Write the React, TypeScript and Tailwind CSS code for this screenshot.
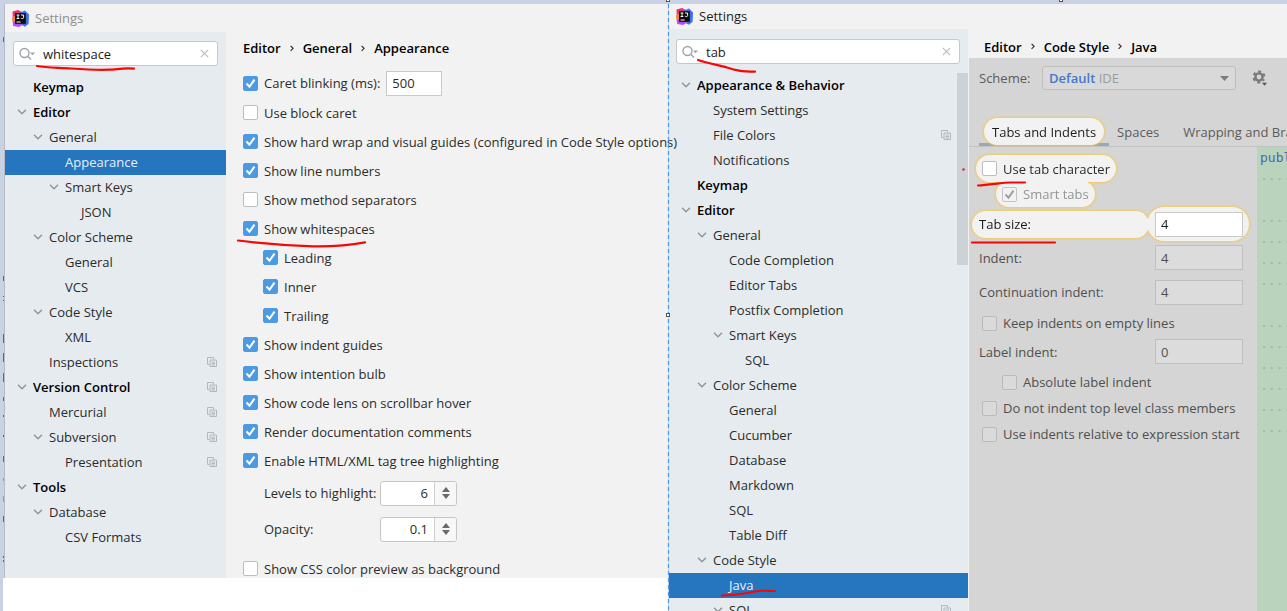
import { useId, type ReactNode } from "react";

type TreeItem = {
  label: string;
  level: number;
  open?: boolean;
  bold?: boolean;
  project?: boolean;
  selected?: boolean;
};

const leftTree: TreeItem[] = [
  { label: "Keymap", level: 0, bold: true },
  { label: "Editor", level: 0, bold: true, open: true },
  { label: "General", level: 1, open: true },
  { label: "Appearance", level: 2, selected: true },
  { label: "Smart Keys", level: 2, open: true },
  { label: "JSON", level: 3 },
  { label: "Color Scheme", level: 1, open: true },
  { label: "General", level: 2 },
  { label: "VCS", level: 2 },
  { label: "Code Style", level: 1, open: true },
  { label: "XML", level: 2 },
  { label: "Inspections", level: 1, project: true },
  { label: "Version Control", level: 0, bold: true, open: true, project: true },
  { label: "Mercurial", level: 1, project: true },
  { label: "Subversion", level: 1, open: true, project: true },
  { label: "Presentation", level: 2, project: true },
  { label: "Tools", level: 0, bold: true, open: true },
  { label: "Database", level: 1, open: true },
  { label: "CSV Formats", level: 2 },
];

const rightTree: TreeItem[] = [
  { label: "Appearance & Behavior", level: 0, bold: true, open: true },
  { label: "System Settings", level: 1 },
  { label: "File Colors", level: 1, project: true },
  { label: "Notifications", level: 1 },
  { label: "Keymap", level: 0, bold: true },
  { label: "Editor", level: 0, bold: true, open: true },
  { label: "General", level: 1, open: true },
  { label: "Code Completion", level: 2 },
  { label: "Editor Tabs", level: 2 },
  { label: "Postfix Completion", level: 2 },
  { label: "Smart Keys", level: 2, open: true },
  { label: "SQL", level: 3 },
  { label: "Color Scheme", level: 1, open: true },
  { label: "General", level: 2 },
  { label: "Cucumber", level: 2 },
  { label: "Database", level: 2 },
  { label: "Markdown", level: 2 },
  { label: "SQL", level: 2 },
  { label: "Table Diff", level: 2 },
  { label: "Code Style", level: 1, open: true },
  { label: "Java", level: 2, selected: true },
  { label: "SQL", level: 2, open: true, project: true },
];

const indents = ["pl-[9px]", "pl-[25px]", "pl-[41px]", "pl-[57px]"];

function AppLogo() {
  return (
    <svg width="17" height="17" viewBox="0 0 17 17" aria-hidden="true">
      <path d="M.5 1.500 6 0l5 2.500L7 9 .8 8z" fill="#e8336d" />
      <path d="M0 7.500 2 6l3 .5V13l-4.500-.5z" fill="#f5803e" />
      <path d="M8 2.500 13 .5l4 4-.4 9.300-3.600 3L8 14z" fill="#3f6fe8" />
      <path d="M.8 12l5-1 5.200 3.800-4 2.200-5.800-1z" fill="#b74af7" />
      <rect x="3" y="3.200" width="10.800" height="10.600" fill="#0b0b0e" />
      <path
        d="M4.600 5h2.800M6 5v3.500M4.600 8.500h2.800M9 5h2.600v2.500q0 1.100-1.200 1.100-.9 0-1.500-.7M4.600 12h4"
        stroke="#fff"
        strokeWidth="1"
        fill="none"
      />
    </svg>
  );
}

function TitleBar({ active }: { active?: boolean }) {
  return (
    <header className="flex h-7 shrink-0 items-center gap-[6px] pl-[7px]">
      <AppLogo />
      <h1 className={active ? "text-[#1c1c1c]" : "text-[#8f8f8f]"}>Settings</h1>
    </header>
  );
}

function SearchBox({ value }: { value: string }) {
  return (
    <div className="flex h-[25px] items-center rounded-[3px] border border-[#c6c9cb] bg-white pr-[8px] pl-[5px]">
      <svg width="18" height="14" viewBox="0 0 18 14" fill="none" stroke="#9aa4ab" strokeWidth="1.400" aria-hidden="true">
        <circle cx="5.500" cy="6" r="4.500" />
        <path d="M9 9.500l3 3" />
        <path d="M11 5.500h5L13.500 8.300z" fill="#9aa4ab" stroke="none" />
      </svg>
      <input
        type="text"
        aria-label="Search settings"
        defaultValue={value}
        className="ml-1.5 min-w-0 flex-1 bg-transparent text-[#1c1c1c] outline-none"
      />
      <button type="button" aria-label="Clear search">
        <svg width="9" height="9" viewBox="0 0 9 9" stroke="#b9bec2" strokeWidth="1.200" aria-hidden="true">
          <path d="M.8.8l7.400 7.400M8.200.8L.8 8.200" />
        </svg>
      </button>
    </div>
  );
}

function Tree({ items, end }: { items: TreeItem[]; end: string }) {
  return (
    <ul>
      {items.map((item, i) => (
        <li key={i}>
          <button
            type="button"
            className={`flex h-[25px] w-full items-center gap-[3px] pb-[2px] text-left ${indents[item.level]} ${end} ${
              item.selected ? "bg-[#2675bf] text-[#e6effa]" : item.bold ? "text-black" : "text-[#2b2b2b]"
            } ${item.bold ? "font-semibold" : ""}`}
          >
            <span className="flex w-4 justify-center">
              {item.open && (
                <svg width="10" height="6" viewBox="0 0 10 6" fill="none" stroke="#8e959a" strokeWidth="1.400" aria-hidden="true">
                  <path d="M1 .8l4 4 4-4" />
                </svg>
              )}
            </span>
            <span className="flex-1 whitespace-nowrap">{item.label}</span>
            {item.project && (
              <svg width="10" height="10" viewBox="0 0 10 10" fill="none" stroke="#b0b9c0" aria-hidden="true">
                <path d="M2.500 7.500h-2v-7h6v2" />
                <path d="M3 3h6.500v6.500H3zM4.500 5h3.500M4.500 6.500h3.500M4.500 8h3.500" />
              </svg>
            )}
          </button>
        </li>
      ))}
    </ul>
  );
}

function Breadcrumb({ path }: { path: string[] }) {
  return (
    <nav className="flex items-center font-semibold text-black">
      {path.map((part, i) => (
        <span key={part} className="flex items-center">
          {i > 0 && (
            <svg className="mx-[9px]" width="4" height="7" viewBox="0 0 4 7" fill="none" stroke="#333" strokeWidth="1.200" aria-hidden="true">
              <path d="M.6.800l2.500 2.500L.6 5.800" />
            </svg>
          )}
          {part}
        </span>
      ))}
    </nav>
  );
}

function Check({
  label,
  checked = false,
  tone = "normal",
}: {
  label: string;
  checked?: boolean;
  tone?: "normal" | "dim" | "disabled";
}) {
  const box =
    tone === "dim"
      ? "border-[#bababa] bg-[#dadada]"
      : tone === "disabled"
        ? "border-[#c4c4c4] bg-[#f2f2f2]"
        : "border-[#bdbdbd] bg-white checked:border-[#4c9be2] checked:bg-[#4c9be2]";
  const text = tone === "dim" ? "text-[#4f4f4f]" : tone === "disabled" ? "text-[#949494]" : "text-[#2b2b2b]";
  return (
    <label className={`flex items-center gap-[6px] whitespace-nowrap ${text}`}>
      <span className="relative flex">
        <input
          type="checkbox"
          defaultChecked={checked}
          disabled={tone === "disabled"}
          className={`peer size-[15px] appearance-none rounded-[2px] border ${box}`}
        />
        <svg
          className="pointer-events-none absolute inset-0 hidden peer-checked:block"
          width="15"
          height="15"
          viewBox="0 0 15 15"
          fill="none"
          stroke={tone === "disabled" ? "#a0a0a0" : "#fff"}
          strokeWidth="2"
          aria-hidden="true"
        >
          <path d="M3.500 7.500l3 3.200 5-7" />
        </svg>
      </span>
      {label}
    </label>
  );
}

function Spinner({ label, value }: { label: string; value: string }) {
  const id = useId();
  return (
    <div className="flex h-9 items-center pl-[21px]">
      <label htmlFor={id} className="w-[116px] whitespace-nowrap">
        {label}
      </label>
      <div className="flex h-[25px] w-[77px] overflow-hidden rounded-[3px] border border-[#c6c6c6] bg-white">
        <input id={id} type="text" defaultValue={value} className="min-w-0 flex-1 pr-1.5 text-right outline-none" />
        <div className="flex w-[22px] flex-col items-center justify-center gap-[2px] border-l border-[#d0d0d0] bg-[#f7f7f7]">
          <button type="button" aria-label={`Increase ${label}`}>
            <svg className="block" width="8" height="5" viewBox="0 0 8 5" fill="#6a6a6a" aria-hidden="true">
              <path d="M0 5l4-5 4 5z" />
            </svg>
          </button>
          <button type="button" aria-label={`Decrease ${label}`}>
            <svg className="block" width="8" height="5" viewBox="0 0 8 5" fill="#6a6a6a" aria-hidden="true">
              <path d="M0 0l4 5 4-5z" />
            </svg>
          </button>
        </div>
      </div>
    </div>
  );
}

function NumberRow({ label, value, height }: { label: string; value: string; height: string }) {
  const id = useId();
  return (
    <div className={`flex items-center pr-[14px] pl-[10px] text-[#4f4f4f] ${height}`}>
      <label htmlFor={id} className="flex-1 whitespace-nowrap">
        {label}
      </label>
      <input
        id={id}
        type="text"
        defaultValue={value}
        className="h-[25px] w-[88px] border border-[#bfbfbf] bg-[#dcdcdc] px-[5px] outline-none"
      />
    </div>
  );
}

function Row({ children, className = "h-[29px]" }: { children: ReactNode; className?: string }) {
  return <div className={`flex items-center ${className}`}>{children}</div>;
}

function AppearanceWindow() {
  return (
    <section className="flex min-w-0 flex-col border-l border-[#b9bcc2] bg-[#f2f2f2]">
      <TitleBar />
      <div className="flex">
        <aside className="w-[221px] shrink-0 bg-[#e6ebef] pt-[9px]">
          <div className="pr-[8px] pb-[9px] pl-[8px]">
            <SearchBox value="whitespace" />
          </div>
          <Tree items={leftTree} end="pr-[9px]" />
        </aside>
        <main className="min-w-0 flex-1 pl-[17px] text-[#2b2b2b]">
          <Row className="mb-1 h-8">
            <Breadcrumb path={["Editor", "General", "Appearance"]} />
          </Row>
          <Row className="h-[30px] gap-[6px]">
            <Check label="Caret blinking (ms):" checked />
            <input
              type="text"
              aria-label="Caret blinking (ms)"
              defaultValue="500"
              className="h-[25px] w-14 border border-[#c9c9c9] bg-white px-[5px] outline-none"
            />
          </Row>
          <Row><Check label="Use block caret" /></Row>
          <Row><Check label="Show hard wrap and visual guides (configured in Code Style options)" checked /></Row>
          <Row><Check label="Show line numbers" checked /></Row>
          <Row><Check label="Show method separators" /></Row>
          <Row><Check label="Show whitespaces" checked /></Row>
          <div className="pl-5">
            <Row><Check label="Leading" checked /></Row>
            <Row><Check label="Inner" checked /></Row>
            <Row><Check label="Trailing" checked /></Row>
          </div>
          <Row><Check label="Show indent guides" checked /></Row>
          <Row><Check label="Show intention bulb" checked /></Row>
          <Row><Check label="Show code lens on scrollbar hover" checked /></Row>
          <Row><Check label="Render documentation comments" checked /></Row>
          <Row><Check label="Enable HTML/XML tag tree highlighting" checked /></Row>
          <Spinner label="Levels to highlight:" value="6" />
          <Spinner label="Opacity:" value="0.1" />
          <Row className="mt-3 h-[19px]"><Check label="Show CSS color preview as background" /></Row>
        </main>
      </div>
    </section>
  );
}

/* Highlight pills: the outline is a filter on the group, so pills that touch share one contour. */
const pill = "rounded-full border-2 border-transparent bg-[#f2f2f2] bg-clip-padding";
const outline = "[filter:drop-shadow(0_0_1px_#f5c53c)_drop-shadow(0_0_1px_#f3cd62)]";

function CodeStyleWindow() {
  return (
    <section className="flex min-w-0 flex-1 flex-col overflow-hidden bg-[#f2f2f2]">
      <div className="-mt-[2px] -mb-[1px] shrink-0">
        <TitleBar active />
      </div>
      <div className="flex min-h-0 flex-1">
        <aside className="relative w-[299px] shrink-0 overflow-hidden bg-[#e6ebef] pt-[10px]">
          <div className="pr-[8px] pb-[9px] pl-[7px]">
            <SearchBox value="tab" />
          </div>
          <Tree items={rightTree} end="pr-[17px]" />
          <div className="absolute top-[44px] right-0 h-[192px] w-[11px] bg-[#cdd2d6]" />
        </aside>
        <main className="flex min-w-0 flex-1 flex-col pl-[1px]">
          <Row className="h-[29px] shrink-0 pt-1.5 pl-[15px]">
            <Breadcrumb path={["Editor", "Code Style", "Java"]} />
          </Row>
          <div className="flex min-h-0 flex-1 flex-col bg-[#d5d5d5]">
            <div className="flex h-10 shrink-0 items-center pl-[10px] text-[#5c5c5c]">
              <label htmlFor="scheme" className="w-[63px]">
                Scheme:
              </label>
              <div className="relative flex h-6 w-[194px] shrink-0 items-center rounded-[3px] border border-[#bdbdbd] bg-[#d9d9d9] px-1.5">
                <select id="scheme" className="absolute inset-0 appearance-none opacity-0">
                  <option>Default IDE</option>
                </select>
                <span className="pointer-events-none flex-1">
                  <span className="font-semibold text-[#4478c8]">Default</span> <span className="text-[#9c9c9c]">IDE</span>
                </span>
                <svg width="9" height="5" viewBox="0 0 9 5" fill="#7d7d7d" aria-hidden="true">
                  <path d="M0 0h9L4.500 5z" />
                </svg>
              </div>
              <button type="button" aria-label="Scheme actions" className="ml-4 shrink-0">
                <svg width="16" height="16" viewBox="0 0 16 16" aria-hidden="true">
                  <g fill="none" stroke="#7a7a7a">
                    <circle cx="7" cy="7" r="3.600" strokeWidth="2.400" />
                    <circle cx="7" cy="7" r="5.400" strokeWidth="2.200" strokeDasharray="2.800 2.855" strokeDashoffset="1.400" transform="rotate(30 7 7)" />
                  </g>
                  <path d="M10 12.800h5L12.500 15.800z" fill="#555" />
                </svg>
              </button>
            </div>
            <div role="tablist" className="flex h-[49px] shrink-0 items-end border-b border-[#c2c2c2] pl-[10px] whitespace-nowrap text-[#5c5c5c]">
              <div className="h-[30px] border-b-[3px] border-[#9aa7b8] px-[3px]">
                <div className={outline}>
                  <button
                    type="button"
                    role="tab"
                    aria-selected="true"
                    className={`h-[31px] px-2 text-[#1c1c1c] ${pill}`}
                  >
                    Tabs and Indents
                  </button>
                </div>
              </div>
              <button type="button" role="tab" aria-selected="false" className="ml-2 h-[28px]">
                Spaces
              </button>
              <button type="button" role="tab" aria-selected="false" className="ml-6 h-[28px]">
                Wrapping and Braces
              </button>
            </div>
            <div className="flex min-h-0 flex-1">
              <div className="w-[288px] shrink-0 pt-1.5">
                <div className={outline}>
                  <div className={`ml-[5px] flex h-[31px] w-fit items-center px-[6px] ${pill}`}>
                    <Check label="Use tab character" />
                  </div>
                  <div className={`-mt-[5px] -mb-[1px] ml-[25px] flex h-[30px] w-fit items-center px-[6px] ${pill}`}>
                    <Check label="Smart tabs" tone="disabled" checked />
                  </div>
                  <div className="flex h-8 items-center pr-[6px] pl-[1px]">
                    <label htmlFor="tab-size" className={`-mr-1.5 flex h-[31px] flex-1 items-center pl-[7px] text-[#1c1c1c] ${pill}`}>
                      Tab size:
                    </label>
                    <div className={`flex h-[38px] w-[106px] shrink-0 items-center pr-[6px] pl-2 ${pill}`}>
                      <input
                        id="tab-size"
                        type="text"
                        defaultValue="4"
                        className="h-[25px] w-full border border-[#c9c9c9] bg-white px-[5px] text-[#1c1c1c] outline-none"
                      />
                    </div>
                  </div>
                </div>
                <NumberRow label="Indent:" value="4" height="h-[35px]" />
                <NumberRow label="Continuation indent:" value="4" height="h-[34px]" />
                <Row className="h-[28px] pl-[13px]"><Check label="Keep indents on empty lines" tone="dim" /></Row>
                <NumberRow label="Label indent:" value="0" height="h-[29px]" />
                <Row className="mt-[3px] h-[26px] pl-[33px]"><Check label="Absolute label indent" tone="dim" /></Row>
                <Row className="h-[26px] pl-[13px]"><Check label="Do not indent top level class members" tone="dim" /></Row>
                <Row className="h-[26px] pl-[13px]"><Check label="Use indents relative to expression start" tone="dim" /></Row>
              </div>
              <pre className="min-w-0 flex-1 overflow-hidden bg-[#b9d3bd] pl-[3px] font-['DejaVu_Sans_Mono',monospace] text-[13px] leading-[21px] text-[#a0b3a4]">
                <span className="text-[#4a68ac]">public</span>
                {"\n····\n\n····\n····\n····\n····\n\n····\n····\n····\n····\n····\n····"}
              </pre>
            </div>
          </div>
        </main>
      </div>
    </section>
  );
}

/* Hand-drawn red marks, the selection frame and its handles. */
function Annotations() {
  return (
    <svg className="pointer-events-none absolute top-0 left-0 z-20" width="1287" height="611" viewBox="0 0 1287 611" aria-hidden="true">
      <path d="M668.500 4v607" stroke="#4f9fe6" strokeWidth="1.300" strokeDasharray="4 3" />
      <g fill="#fff" stroke="#555">
        <rect x="666.500" y="-1.500" width="3" height="3" />
        <rect x="1059.500" y="-1.500" width="3" height="3" />
        <rect x="666.500" y="313.500" width="3" height="3" />
      </g>
      <g fill="none" stroke="#f80606" strokeWidth="2.200" strokeLinecap="round" strokeLinejoin="round">
        <path d="M37 66c10 2 22 1.500 34 2.500 14 1 26 1.800 38 1.200 9-.4 15-2 25-1" />
        <path d="M238 240.500c24 3 50 5 75 5.800 20 .4 36-1 52-4" />
        <path d="M698 60c10 3.500 20 5 29 7.500 9 3 14 4 28 4.200" />
        <path d="M978 185.500c12-.5 24-3 33-3h14" />
        <path d="M972 242.500h83" />
        <path d="M722 595.500c14-.5 24-2 33-4 8-1.500 12-.5 20-.5" />
      </g>
      <circle cx="963.500" cy="169.500" r="1.200" fill="#e02020" />
      <g fill="#5b6780">
        <rect x="3" y="37" width="1" height="5" />
        <rect x="3" y="276" width="1" height="5" />
        <path d="M3 296h1v1H3zM3 300h1v1H3zM3 334h1v9H3zM3 353h1v9H3z" />
        <path d="M3 373h1v9H3zM3 397h1v4H3zM3 415h1v2H3zM3 435h1v2H3z" />
        <path d="M3 456h1v6H3zM3 516h1v6H3zM3 556h1v2H3zM3 560h1v2H3z" />
      </g>
      <path d="M3 478h1v3H3zM3 496h1v6H3z" fill="#d58c4c" />
    </svg>
  );
}

export default function App() {
  return (
    <div className="relative flex h-screen w-full flex-col overflow-hidden bg-[#c9d2e4] pt-1 font-['Open_Sans','Noto_Sans',sans-serif] text-[13px] leading-[18px]">
      <div className="grid min-h-0 flex-1 grid-cols-[minmax(0,665fr)_minmax(0,619fr)] grid-rows-[minmax(0,1fr)] pl-[3px]">
        <div className="relative z-10 flex min-w-0 flex-col">
          <div className="bg-[#c9d2e4] pl-[1px]">
            <AppearanceWindow />
          </div>
          <div className="min-h-0 flex-1 bg-white" />
        </div>
        <div className="flex min-h-0 min-w-0 flex-col pl-[1px]">
          <CodeStyleWindow />
        </div>
      </div>
      <Annotations />
    </div>
  );
}
